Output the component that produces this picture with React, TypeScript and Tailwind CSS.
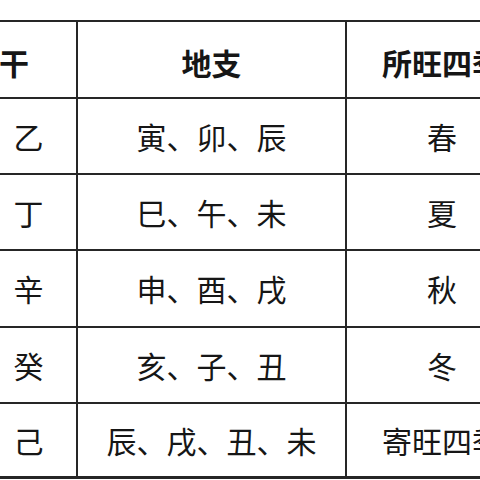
import React from "react";

const rows: [string, string, string][] = [
  ["乙", "寅、卯、辰", "春"],
  ["丁", "巳、午、未", "夏"],
  ["辛", "申、酉、戌", "秋"],
  ["癸", "亥、子、丑", "冬"],
  ["己", "辰、戌、丑、未", "寄旺四季"],
];

const heights = ["h-[76px]", "h-[76px]", "h-[77px]", "h-[76px]", "h-[75px]"];

export default function App() {
  return (
    <div
      className="w-[480px] h-[480px] overflow-hidden bg-white pt-[20px] text-[#161616]"
      style={{ fontFamily: '"Noto Sans CJK SC", "Noto Sans", sans-serif' }}
    >
      <div className="ml-[-19px] w-[556px] border-t-2 border-[#262626]">
        <div className="flex h-[77px] border-b-2 border-[#262626] text-[30px] font-bold">
          <div className="w-[97px] shrink-0 border-r-2 border-[#262626] flex items-center justify-end pr-[47px] pt-[5px] whitespace-nowrap">
            天干
          </div>
          <div className="w-[269px] shrink-0 border-r-2 border-[#262626] flex items-center justify-center pt-[5px]">
            地支
          </div>
          <div className="w-[190px] shrink-0 flex items-center justify-center pt-[5px] whitespace-nowrap">
            所旺四季
          </div>
        </div>
        {rows.map((r, i) => (
          <div
            key={i}
            className={`flex ${heights[i]} ${i === rows.length - 1 ? "border-b-[3px]" : "border-b-2"} border-[#262626] text-[30px] font-normal`}
          >
            <div className="w-[97px] shrink-0 border-r-2 border-[#262626] flex items-center justify-center">
              {r[0]}
            </div>
            <div className="w-[269px] shrink-0 border-r-2 border-[#262626] flex items-center justify-center whitespace-nowrap">
              {r[1]}
            </div>
            <div className="w-[190px] shrink-0 flex items-center justify-center whitespace-nowrap">
              {r[2]}
            </div>
          </div>
        ))}
      </div>
    </div>
  );
}
